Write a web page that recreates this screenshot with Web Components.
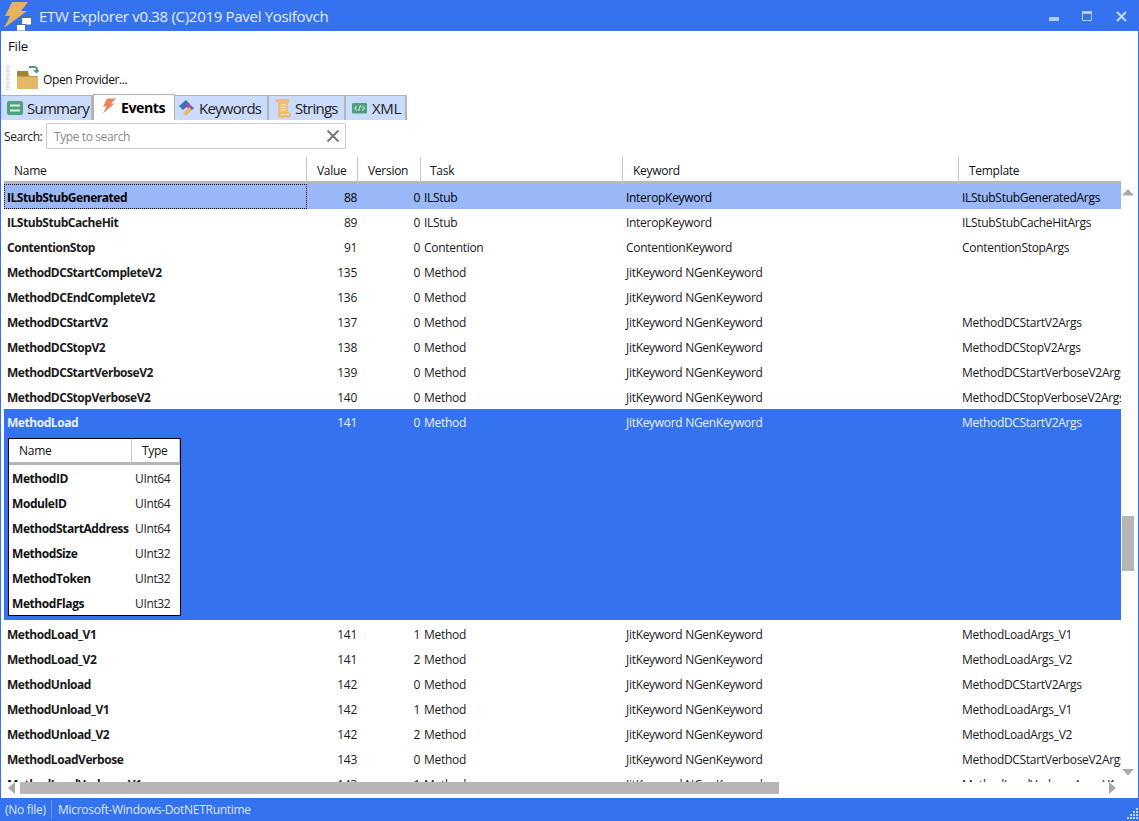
<!DOCTYPE html>
<html><head><meta charset="utf-8"><title>ETW Explorer</title>
<style>
html,body{margin:0;height:100%;overflow:hidden;background:#fff}
body{font-family:"Open Sans","Noto Sans",sans-serif;color:#111}
</style></head><body>
<etw-window>
  <title-bar slot="title">ETW Explorer v0.38 (C)2019 Pavel Yosifovch</title-bar>
  <menu-bar>File</menu-bar>
  <tool-bar>Open Provider...</tool-bar>
  <tab-strip>
    <tab-item icon="summary" w="92">Summary</tab-item>
    <tab-item icon="events" w="82" active>Events</tab-item>
    <tab-item icon="keywords" w="94">Keywords</tab-item>
    <tab-item icon="strings" w="77">Strings</tab-item>
    <tab-item icon="xml" w="61">XML</tab-item>
  </tab-strip>
  <search-box></search-box>
  <event-table></event-table>
  <status-bar></status-bar>
</etw-window>
<script>
function def(name,css,html,init){
  customElements.define(name,class extends HTMLElement{
    constructor(){super();const s=this.attachShadow({mode:'open'});s.innerHTML='<style>'+css+'</style>'+(typeof html==='function'?html(this):html);}
    connectedCallback(){if(init)init(this,this.shadowRoot);}
  });
}
def('etw-window',`:host{display:flex;flex-direction:column;box-sizing:border-box;width:1139px;height:821px;border:solid #3572f0;border-width:0 1px;background:#fff}
 ::slotted(event-table){flex:1;min-height:0}`,`<slot name="title"></slot><slot></slot>`);

def('title-bar',`:host{display:flex;align-items:center;height:31px;background:#3572f0;margin:0 -1px;flex:none;color:#e4ecfd;font-size:15px;letter-spacing:-.3px}
 .logo{width:33px;height:31px;margin:0 6px 0 0;flex:none}
 .t{flex:1;padding-top:1px;white-space:nowrap}
 .c{display:flex;flex:none;margin-right:12px;gap:23px;align-items:flex-start;height:31px}
 svg{display:block}`,
 `<svg class="logo" viewBox="0 0 33 31"><path d="M12 2h16l-7 9h6L4 28l6-12H5z" fill="#e8b25c"/><rect x="21.500" y="16.500" width="10" height="8.500" fill="#fff" stroke="#4f6f9f" stroke-width="1"/><rect x="21" y="16" width="11" height="2" fill="#4f6f9f"/><rect x="16.500" y="24.500" width="9" height="6.500" fill="#fff" stroke="#4f6f9f" stroke-width="1"/></svg>
 <span class="t"><slot></slot></span>
 <span class="c">
 <svg width="10" height="31"><rect x="0" y="17" width="10" height="4" fill="#b4cbfa"/></svg>
 <svg width="11" height="31"><path d="M.5 11.500h9v9h-9z" fill="none" stroke="#b4cbfa"/><rect x="0" y="11" width="10" height="3" fill="#b4cbfa"/></svg>
 <svg width="11" height="31"><path d="M1 12l9 9M10 12l-9 9" stroke="#c2d5fb" stroke-width="2.200"/></svg>
 </span>`);

def('menu-bar',`:host{display:block;height:31px;flex:none;box-sizing:border-box;padding:5px 0 0 7px;font-size:13.200px;line-height:20px;letter-spacing:-.2px;color:#111}`,`<slot></slot>`);

def('tool-bar',`:host{display:flex;align-items:center;height:32px;flex:none;font-size:12px;letter-spacing:-.4px;color:#111}
 .g{width:3px;height:26px;margin:0 7px 0 5px;background:repeating-linear-gradient(#d4d4d4 0 1px,#fff 1px 2px)}
 svg{flex:none;margin-right:4px}`,
 `<span class="g"></span><svg width="23" height="26" viewBox="0 0 23 26"><path d="M1 6h11l1 5h9v2H1z" fill="#a5822f"/><path d="M1 11.500h21V24H1z" fill="#e4b668"/><path d="M13 2h5c2 0 3 1 3 3v1" fill="none" stroke="#4a9d7b" stroke-width="1.800"/><path d="M17 5h7l-3.500 3.500z" fill="#4a9d7b"/></svg><span style="padding-top:3px"><slot></slot></span>`);

def('tab-strip',`:host{display:flex;align-items:flex-end;height:26px;flex:none}`,`<slot></slot>`);

const tabIcons={
 summary:`<svg width="17" height="15" viewBox="0 0 17 15"><rect width="16" height="14" rx="2" fill="#4ea27d"/><path d="M3 4.500h10M3 9.500h10" stroke="#dff0e8" stroke-width="2"/></svg>`,
 events:`<svg width="15" height="16" viewBox="0 0 15 16"><path d="M5 .5h9L9 5.500h3.500L1 15.500l3.500-7H1z" fill="#e9845c"/></svg>`,
 keywords:`<svg width="16" height="16" viewBox="0 0 16 16"><path d="M0 6l7-6 4 4-7 6z" fill="#3d6fb6"/><path d="M9 3l6 5-3 3-6-5z" fill="#8c55a6"/><path d="M4 13l6-6 3 3-6 6z" fill="#edb96c"/></svg>`,
 strings:`<svg width="17" height="19" viewBox="0 0 17 19"><path d="M2 0h11c2 0 2 3.500 0 3.500v10h1c2.500 0 2.500 5 0 5H5c-2 0-2.500-2-2-5V3.500H2C0 3.500 0 0 2 0z" fill="#edbb72"/><path d="M5.500 6h6M5.500 8.500h6M5.500 11h6M6 15.500h8" stroke="#fbeacb" stroke-width="1"/></svg>`,
 xml:`<svg width="16" height="11" viewBox="0 0 16 11"><rect width="15" height="10.500" rx="1" fill="#4ea27d"/><path d="M5 3L2.500 5.200 5 7.500M10 3l2.500 2.200L10 7.500M8.500 2.500l-2 5.500" fill="none" stroke="#fff" stroke-width="1"/></svg>`};
def('tab-item',`:host{display:flex;box-sizing:border-box;align-items:center;height:25px;background:#cbdbfb;border:solid #b4b4b4;border-width:1px 2px 0 0;font-size:15px;letter-spacing:-.75px;color:#222;white-space:nowrap;overflow:hidden;padding-left:6px}
 :host([active]){height:26px;background:#fff;font-weight:700;font-size:14.200px;letter-spacing:-.5px;color:#000;border-width:1px 1px 0;padding:0 0 1px 8px}
 svg{flex:none;margin-right:3px}:host([active]) svg{margin-right:4px;margin-top:-3px}
 :host([icon=keywords]){padding-left:4px}:host([icon=keywords]) svg{margin-right:4px}
 :host([icon=xml]){letter-spacing:-.35px}:host([icon=xml]) svg{margin-right:4px}`,
 h=>tabIcons[h.getAttribute('icon')]+'<span><slot></slot></span>',
 h=>{h.style.width=h.getAttribute('w')+'px';});

def('search-box',`:host{display:flex;align-items:center;height:28px;flex:none;margin-top:2px;font-size:12px;letter-spacing:-.4px}
 .l{width:45px;padding-left:3px;box-sizing:border-box;color:#222}
 .b{width:300px;height:26px;box-sizing:border-box;border:1px solid #cfcfcf;display:flex;align-items:center;padding:0 5px 0 7px;color:#8a8a8a}
 .p{flex:1}svg{display:block}`,
 `<span class="l">Search:</span><span class="b"><span class="p">Type to search</span><svg width="14" height="14" viewBox="0 0 14 14"><path d="M1.500 1.500l11 11M12.500 1.500l-11 11" stroke="#777" stroke-width="2"/></svg></span>`);

const ROWS=[["ILStubStubGenerated",88,0,"ILStub","InteropKeyword","ILStubStubGeneratedArgs"],["ILStubStubCacheHit",89,0,"ILStub","InteropKeyword","ILStubStubCacheHitArgs"],["ContentionStop",91,0,"Contention","ContentionKeyword","ContentionStopArgs"],["MethodDCStartCompleteV2",135,0,"Method","JitKeyword NGenKeyword",""],["MethodDCEndCompleteV2",136,0,"Method","JitKeyword NGenKeyword",""],["MethodDCStartV2",137,0,"Method","JitKeyword NGenKeyword","MethodDCStartV2Args"],["MethodDCStopV2",138,0,"Method","JitKeyword NGenKeyword","MethodDCStopV2Args"],["MethodDCStartVerboseV2",139,0,"Method","JitKeyword NGenKeyword","MethodDCStartVerboseV2Args"],["MethodDCStopVerboseV2",140,0,"Method","JitKeyword NGenKeyword","MethodDCStopVerboseV2Args"],["MethodLoad",141,0,"Method","JitKeyword NGenKeyword","MethodDCStartV2Args"],["MethodLoad_V1",141,1,"Method","JitKeyword NGenKeyword","MethodLoadArgs_V1"],["MethodLoad_V2",141,2,"Method","JitKeyword NGenKeyword","MethodLoadArgs_V2"],["MethodUnload",142,0,"Method","JitKeyword NGenKeyword","MethodDCStartV2Args"],["MethodUnload_V1",142,1,"Method","JitKeyword NGenKeyword","MethodLoadArgs_V1"],["MethodUnload_V2",142,2,"Method","JitKeyword NGenKeyword","MethodLoadArgs_V2"],["MethodLoadVerbose",143,0,"Method","JitKeyword NGenKeyword","MethodDCStartVerboseV2Args"],["MethodLoadVerbose_V1",143,1,"Method","JitKeyword NGenKeyword","MethodLoadVerboseArgs_V1"]];
const COLS='303px 51px 63px 202px 336px 162px';
def('event-table',`:host{display:grid;grid-template-columns:minmax(0,1fr) 17px;grid-template-rows:minmax(0,1fr) 13px;padding:7px 0 3px 3px;min-height:0}
 .main{grid-column:1;grid-row:1;display:flex;flex-direction:column;min-width:0;min-height:0;overflow:hidden}
 .head{display:grid;grid-template-columns:${COLS};height:24px;flex:none;border-bottom:3px solid #b7b7b7;box-sizing:content-box;font-size:12px;letter-spacing:-.28px;color:#111}
 .head span{border-right:1px solid #c8c8c8;line-height:27px;box-sizing:border-box;white-space:nowrap}
 .head span:last-child{border:0}
 .body{flex:1;min-height:0;overflow:hidden}
 .vs{grid-column:2;grid-row:1;display:flex;flex-direction:column;align-items:center;padding:5px 4px 0 1px}
 .vsp1{height:320px;flex:none}.vt{width:12px;height:55px;background:#b6b6b6;flex:none}.vsp2{flex:1}
 .hs{grid-column:1/3;grid-row:2;display:flex;align-items:center;height:12px;padding-left:4px;width:1112px;box-sizing:border-box}
 .ht{width:759px;height:12px;background:#b6b6b6;margin-left:5px}.hg{flex:1}
 svg{display:block;flex:none}`,
 `<div class="main"><div class="head" id="h"></div><div class="body" id="b"></div></div>
  <div class="vs"><svg width="12" height="7" style="margin-top:27px"><path d="M6 0l6 6.500H0z" fill="#a8a8a8"/></svg><div class="vsp1"></div><div class="vt"></div><div class="vsp2"></div><svg width="12" height="7" style="margin-bottom:6px"><path d="M6 6.500L12 0H0z" fill="#a8a8a8"/></svg></div>
  <div class="hs"><svg width="7" height="12"><path d="M0 6l7-6v12z" fill="#a8a8a8"/></svg><div class="ht"></div><div class="hg"></div><svg width="7" height="12"><path d="M7 6L0 0v12z" fill="#a8a8a8"/></svg></div>`,
 (h,s)=>{
  if(s.getElementById('h').children.length)return;
  const heads=[['Name',10],['Value',10],['Version',10],['Task',9],['Keyword',10],['Template',10]];
  s.getElementById('h').innerHTML=heads.map(([t,p])=>`<span style="padding-left:${p}px">${t}</span>`).join('');
  const b=s.getElementById('b');
  ROWS.forEach((r,i)=>{const e=document.createElement('event-row');e.setAttribute('cols',COLS);e.data=r;
    if(i===0)e.setAttribute('focus','');
    if(i===9){e.setAttribute('open','');const f=document.createElement('field-table');f.slot='detail';e.appendChild(f);}
    b.appendChild(e);});
 });

def('event-row',`:host{display:block;font-size:12px;letter-spacing:-.3px;color:#1a1a1a}
 :host([focus]){background:#9ab8f8;color:#000}
 :host([open]){background:#3572f0;color:#eaf0fe;margin-bottom:1px}
 .r{display:grid;height:25px;line-height:27px;white-space:nowrap}
 .r>span{overflow:hidden;box-sizing:border-box}
 .n{font-weight:700;padding-left:3px;letter-spacing:-.45px}
 .num{text-align:right}
 :host([focus]) .n{outline:1px dotted #000;outline-offset:-1px}
 .d{display:none}:host([open]) .d{display:block;box-sizing:border-box;height:186px;padding-top:4px}`,
 `<div class="r" id="r"></div><div class="d"><slot name="detail"></slot></div>`,
 (h,s)=>{const r=s.getElementById('r');r.style.gridTemplateColumns=h.getAttribute('cols');
  const d=h.data;r.innerHTML=`<span class="n">${d[0]}</span><span class="num" style="padding-right:1px">${d[1]}</span><span class="num" style="padding-right:1px">${d[2]}</span><span style="padding-left:3px">${d[3]}</span><span style="padding-left:3px">${d[4]}</span><span style="padding-left:3px">${d[5]}</span>`;});

const FIELDS=[["MethodID","UInt64"],["ModuleID","UInt64"],["MethodStartAddress","UInt64"],["MethodSize","UInt32"],["MethodToken","UInt32"],["MethodFlags","UInt32"]];
def('field-table',`:host{display:block;box-sizing:border-box;width:173px;height:178px;margin:0 0 0 4px;background:#fff;border:1px solid #000;color:#222;font-size:12px;letter-spacing:-.36px}
 .h{display:grid;grid-template-columns:123px 48px;height:23px;border-bottom:3px solid #b7b7b7;line-height:24px;color:#111;letter-spacing:-.28px}
 .h span:first-child{padding-left:10px;border-right:1px solid #c8c8c8}.h span:last-child{padding-left:10px;border-right:1px solid #c8c8c8}
 .r{display:grid;grid-template-columns:126px 1fr;height:25px;line-height:26px;white-space:nowrap}
 .r b{padding-left:3px;font-weight:700;color:#111;letter-spacing:-.43px}`,
 `<div class="h"><span>Name</span><span>Type</span></div><div style="padding-top:1px">`+FIELDS.map(f=>`<div class="r"><b>${f[0]}</b><span>${f[1]}</span></div>`).join('')+`</div>`);

def('status-bar',`:host{display:flex;align-items:center;height:23px;flex:none;margin:0 -1px;background:#3572f0;color:#dce7fd;font-size:12px;letter-spacing:-.28px}
 .a{padding-left:5px;width:51px;box-sizing:border-box;white-space:nowrap}
 .s{width:1px;height:19px;background:#6f97ee;margin:0 6px 0 0}
 .g{flex:1}svg{display:block;margin-top:9px}`,
 `<span class="a">(No file)</span><span class="s"></span><span>Microsoft-Windows-DotNETRuntime</span><span class="g"></span><svg width="12" height="12"><g fill="#c3d5fb"><rect x="9" y="0" width="2" height="2"/><rect x="6" y="3" width="2" height="2"/><rect x="9" y="3" width="2" height="2"/><rect x="3" y="6" width="2" height="2"/><rect x="6" y="6" width="2" height="2"/><rect x="9" y="6" width="2" height="2"/><rect x="0" y="9" width="2" height="2"/><rect x="3" y="9" width="2" height="2"/><rect x="6" y="9" width="2" height="2"/><rect x="9" y="9" width="2" height="2"/></g></svg>`);
</script>
</body></html>
